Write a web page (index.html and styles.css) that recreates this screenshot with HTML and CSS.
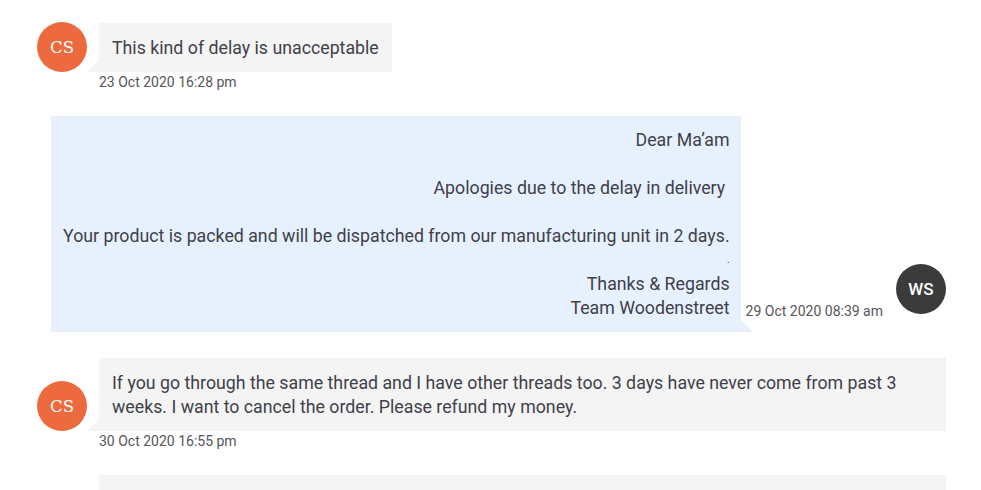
FILE: index.html
```html
<!DOCTYPE html>
<html lang="en">
<head>
<meta charset="utf-8">
<title>Conversation</title>
<link rel="stylesheet" href="styles.css">
</head>
<body>
<div class="thread">
  <div class="msg msg-in">
    <div class="msg-line">
      <div class="avatar avatar-cs">CS</div>
      <div class="bubble bubble-in">This kind of delay is unacceptable</div>
    </div>
    <div class="time time-in">23 Oct 2020 16:28 pm</div>
  </div>

  <div class="msg msg-out">
    <div class="bubble bubble-out">
      <div>Dear Ma’am</div>
      <div>&nbsp;</div>
      <div>Apologies due to the delay in delivery&nbsp;</div>
      <div>&nbsp;</div>
      <div>Your product is packed and will be dispatched from our manufacturing unit in 2 days.</div>
      <div class="dot">.</div>
      <div>Thanks &amp; Regards</div>
      <div>Team Woodenstreet</div>
    </div>
    <div class="time time-out">29 Oct 2020 08:39 am</div>
    <div class="avatar avatar-ws">WS</div>
  </div>

  <div class="msg msg-in">
    <div class="msg-line">
      <div class="avatar avatar-cs">CS</div>
      <div class="bubble bubble-in bubble-wide">If you go through the same thread and I have other threads too. 3 days have never come from past 3 weeks. I want to cancel the order. Please refund my money.</div>
    </div>
    <div class="time time-in">30 Oct 2020 16:55 pm</div>
  </div>

  <div class="msg msg-in">
    <div class="msg-line">
      <div class="avatar avatar-cs">CS</div>
      <div class="bubble bubble-in bubble-wide bubble-cut"></div>
    </div>
  </div>
</div>
</body>
</html>
```

FILE: styles.css
```css
html, body {
  margin: 0;
  padding: 0;
  background: #ffffff;
  overflow: hidden;
}

body {
  font-family: Roboto, "Liberation Sans", Arial, sans-serif;
  color: #40404a;
}

.thread {
  display: flex;
  flex-direction: column;
  padding: 22px 35px 0 37px;
}

.msg {
  margin-bottom: 24px;
}

.msg-in {
  display: flex;
  flex-direction: column;
}

.msg-line {
  display: flex;
  align-items: flex-end;
}

.avatar {
  width: 50px;
  height: 50px;
  border-radius: 50%;
  flex: none;
  display: flex;
  align-items: center;
  justify-content: center;
  color: #ffffff;
}

.avatar-cs {
  background: #ec6a3d;
  font-family: "DejaVu Serif", "Liberation Serif", serif;
  font-size: 16.5px;
  margin-right: 12px;
}

.avatar-ws {
  background: #3b3b3b;
  font-family: Roboto, "Liberation Sans", sans-serif;
  font-size: 17px;
  font-weight: 500;
  margin-left: 13px;
  margin-bottom: 18px;
}

.bubble {
  position: relative;
  font-size: 17.75px;
  line-height: 24px;
}

.bubble-in {
  background: #f4f4f4;
  padding: 13px 13px 12px 13px;
}

.bubble-in::before {
  content: "";
  position: absolute;
  left: -12px;
  bottom: 0;
  width: 0;
  height: 0;
  border-bottom: 12px solid #f4f4f4;
  border-left: 12px solid transparent;
}

.bubble-wide {
  flex: 1;
}

.bubble-cut {
  min-height: 140px;
}

.time {
  font-size: 14px;
  line-height: 20px;
  color: #555558;
}

.time-in {
  margin-left: 62px;
}

.msg-out {
  display: flex;
  justify-content: flex-end;
  align-items: flex-end;
  margin-bottom: 26px;
}

.bubble-out {
  background: #e6f1fd;
  padding: 12px 11px 12px 12px;
  text-align: right;
}

.bubble-out::after {
  content: "";
  position: absolute;
  right: -12px;
  bottom: 0;
  width: 0;
  height: 0;
  border-bottom: 12px solid #e6f1fd;
  border-right: 12px solid transparent;
}

.dot {
  font-size: 10px;
}

.time-out {
  margin-left: 5px;
  margin-bottom: 11px;
}
```
